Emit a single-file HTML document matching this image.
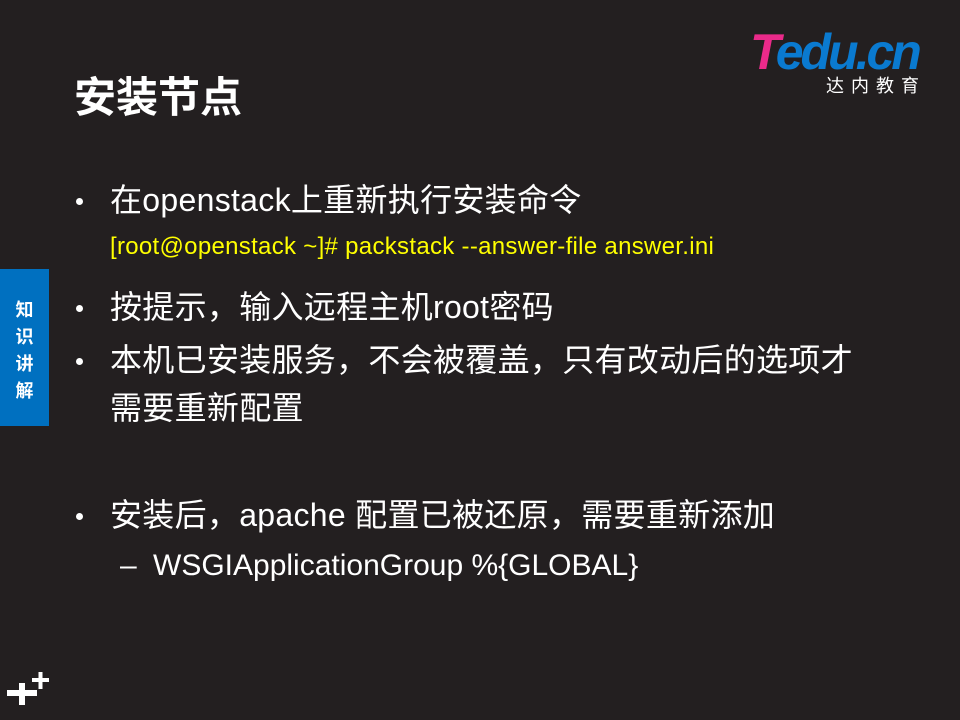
<!DOCTYPE html>
<html><head><meta charset="utf-8"><style>
body{margin:0;width:960px;height:720px;background:#231f20;position:relative;overflow:hidden;font-family:"Liberation Sans","Noto Sans CJK SC",sans-serif;color:#fff}
.a{position:absolute;white-space:nowrap;line-height:1.15}
.t{font-size:42px;font-weight:bold;left:74px;top:74px}
.b{font-size:32px;left:110px;letter-spacing:0.3px}
.dot{position:absolute;left:76px;width:7px;height:7px;border-radius:50%;background:#fff}
.y{color:#ffff00;font-size:24px;left:110px;top:233px;letter-spacing:0.3px}
.tab{position:absolute;left:0;top:269px;width:49px;height:157px;background:#0070c0;font-weight:bold;font-size:18px;line-height:27px;text-align:center;padding-top:28px;box-sizing:border-box}
</style></head><body>
<div class="a t">安装节点</div>
<div class="a" style="left:750px;top:24px;font-size:50px;font-weight:bold;font-style:italic;letter-spacing:-3px;color:#0a7ad0"><span style="color:#ea2a8a">T</span>edu.cn</div>
<div class="a" style="left:826px;top:76px;font-size:18px;letter-spacing:7px">达内教育</div>
<div class="dot" style="top:198px"></div><div class="a b" style="top:182px">在openstack上重新执行安装命令</div>
<div class="a y">[root@openstack ~]# packstack --answer-file answer.ini</div>
<div class="dot" style="top:305px"></div><div class="a b" style="top:289px">按提示，输入远程主机root密码</div>
<div class="dot" style="top:358px"></div><div class="a b" style="top:342px">本机已安装服务，不会被覆盖，只有改动后的选项才</div>
<div class="a b" style="top:390px">需要重新配置</div>
<div class="dot" style="top:513px"></div><div class="a b" style="top:497px">安装后，apache 配置已被还原，需要重新添加</div>
<div class="a" style="left:120px;top:549px;font-size:30px">–</div>
<div class="a" style="left:153px;top:549px;font-size:30px">WSGIApplicationGroup %{GLOBAL}</div>
<div class="tab">知<br>识<br>讲<br>解</div>
<svg class="a" style="left:0;top:660px" width="60" height="60"><path d="M7 693H37M22 683V705" transform="translate(0,-660)" stroke="#fff" stroke-width="6"/><path d="M32 680H49M40.5 672V689" transform="translate(0,-660)" stroke="#fff" stroke-width="4"/></svg>
</body></html>
